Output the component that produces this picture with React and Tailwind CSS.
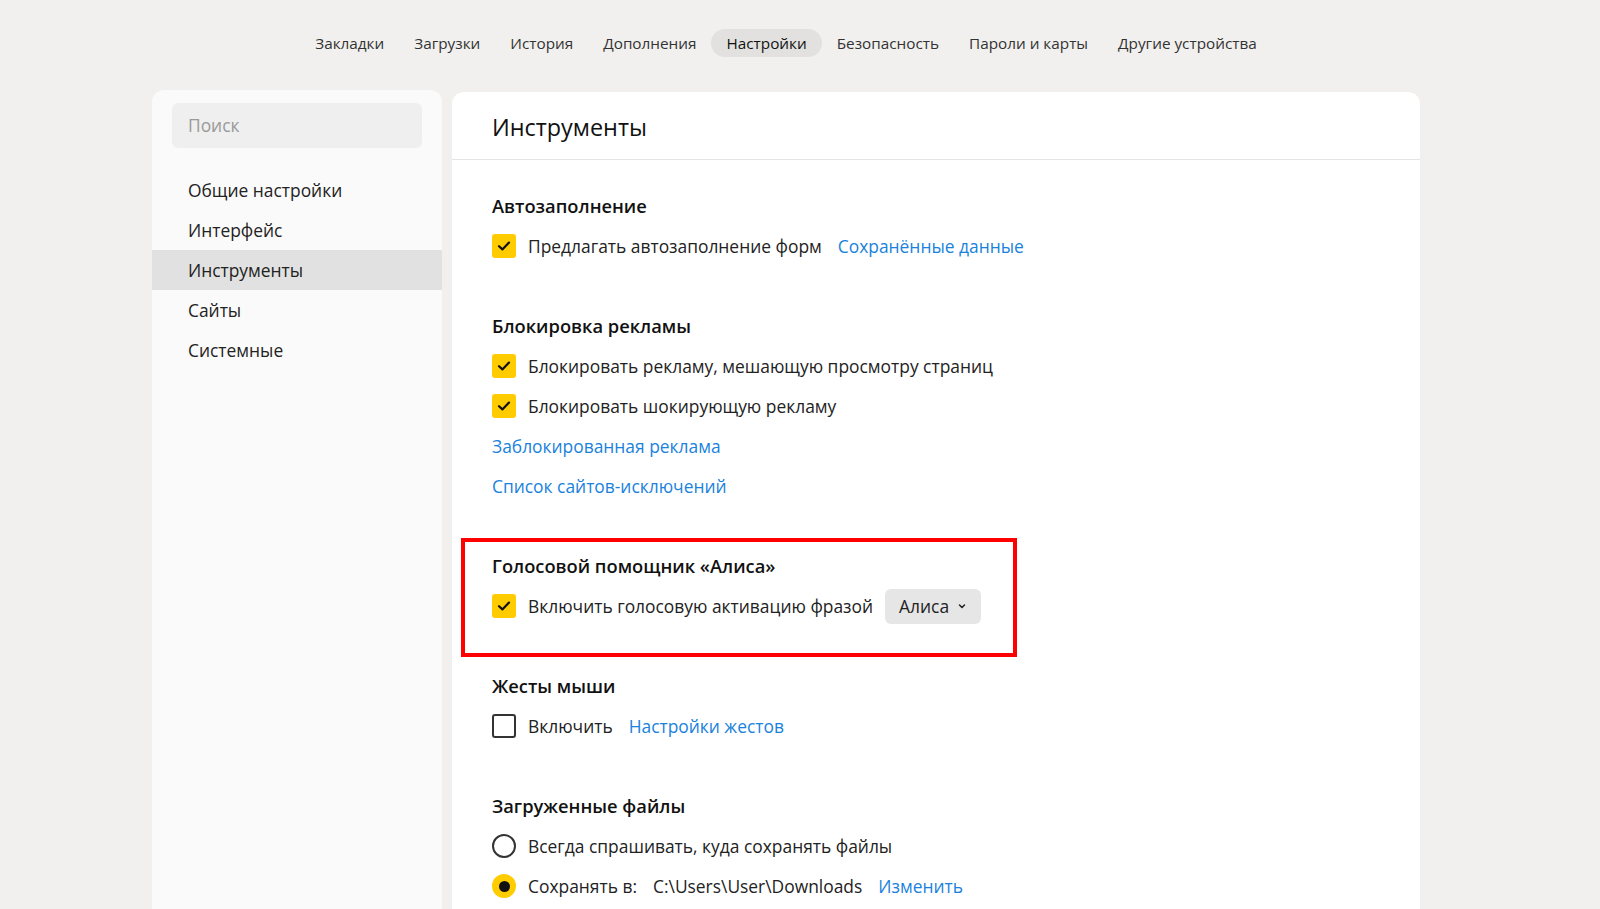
import React from 'react';

const font = { fontFamily: '"Open Sans", "Noto Sans", sans-serif' };

const tabs = ['Закладки', 'Загрузки', 'История', 'Дополнения', 'Настройки', 'Безопасность', 'Пароли и карты', 'Другие устройства'];
const menu = ['Общие настройки', 'Интерфейс', 'Инструменты', 'Сайты', 'Системные'];

function Check({ on }) {
    if (!on) {
        return <div className="w-6 h-6 shrink-0 rounded-[3px] border-2 border-[#333]"></div>;
    }
    return (
        <div className="w-6 h-6 shrink-0 rounded-[3px] bg-[#ffcc00] flex items-center justify-center">
            <svg width="16" height="16" viewBox="0 0 16 16" fill="none">
                <path d="M3 8.2 L6.4 11.4 L13 4.6" stroke="#111" strokeWidth="2.2" strokeLinecap="round" strokeLinejoin="round" />
            </svg>
        </div>
    );
}

function Radio({ on }) {
    if (on) {
        return (
            <div className="w-6 h-6 shrink-0 rounded-full bg-[#ffcc00] flex items-center justify-center">
                <div className="w-[11px] h-[11px] rounded-full bg-[#111]"></div>
            </div>
        );
    }
    return <div className="w-6 h-6 shrink-0 rounded-full border-2 border-[#333]"></div>;
}

function Link({ children }) {
    return <span className="text-[#1a82dc] cursor-pointer">{children}</span>;
}

function Row({ children }) {
    return <div className="h-10 flex items-center gap-3 text-[#222]">{children}</div>;
}

function Section({ title, children }) {
    return (
        <div className="mb-10">
            <div className="h-10 flex items-center font-semibold text-[18.3px] text-[#111]">{title}</div>
            {children}
        </div>
    );
}

export default function App() {
    return (
        <div className="w-full h-[909px] overflow-hidden bg-[#f1f0ee]" style={font}>
            <div className="w-[1572px]">
                <div className="h-[88px] pt-[29px] flex justify-center">
                    <div className="flex h-7 text-[15.3px] text-[#333]">
                        {tabs.map((t) => (
                            <div
                                key={t}
                                className={`px-[15px] flex items-center rounded-full ${t === 'Настройки' ? 'bg-[#e2e1df] text-[#111]' : ''}`}
                            >
                                {t}
                            </div>
                        ))}
                    </div>
                </div>

                <div className="mx-auto w-[1268px] flex gap-[10px] pt-[2px]">
                    <div className="w-[290px] h-[900px] shrink-0 bg-[#fafafa] rounded-t-xl pt-[13px]">
                        <div className="mx-5 h-[45px] rounded-md bg-[#efefef] flex items-center px-4 text-[17.4px] text-[#999]">
                            Поиск
                        </div>
                        <div className="mt-[22px] text-[17.4px] text-[#222]">
                            {menu.map((m) => (
                                <div
                                    key={m}
                                    className={`h-10 flex items-center pl-9 ${m === 'Инструменты' ? 'bg-[#e1e1e1]' : ''}`}
                                >
                                    {m}
                                </div>
                            ))}
                        </div>
                    </div>

                    <div className="flex-1 h-[900px] bg-white rounded-t-xl mt-[2px]">
                        <div className="h-[68px] border-b border-[#e4e4e4] flex items-center pt-[5px] px-10 text-[23.4px] text-[#111]">
                            Инструменты
                        </div>
                        <div className="px-10 pt-[26px] text-[17.4px]">
                            <Section title="Автозаполнение">
                                <Row>
                                    <Check on />
                                    <span>Предлагать автозаполнение форм</span>
                                    <span className="ml-1"><Link>Сохранённые данные</Link></span>
                                </Row>
                            </Section>

                            <Section title="Блокировка рекламы">
                                <Row>
                                    <Check on />
                                    <span>Блокировать рекламу, мешающую просмотру страниц</span>
                                </Row>
                                <Row>
                                    <Check on />
                                    <span>Блокировать шокирующую рекламу</span>
                                </Row>
                                <Row>
                                    <Link>Заблокированная реклама</Link>
                                </Row>
                                <Row>
                                    <Link>Список сайтов-исключений</Link>
                                </Row>
                            </Section>

                            <div className="relative">
                                <div className="absolute left-[-31px] top-[-8px] w-[556px] h-[119px] border-4 border-[#ff0000] pointer-events-none"></div>
                                <Section title="Голосовой помощник «Алиса»">
                                    <Row>
                                        <Check on />
                                        <span>Включить голосовую активацию фразой</span>
                                        <div className="ml-0 h-[35px] px-[14px] rounded-md bg-[#e6e6e6] flex items-center gap-2 text-[#222]">
                                            Алиса
                                            <svg width="10" height="10" viewBox="0 0 10 10" fill="none">
                                                <path d="M2.5 4 L5 6.5 L7.5 4" stroke="#222" strokeWidth="1.5" strokeLinecap="round" strokeLinejoin="round" />
                                            </svg>
                                        </div>
                                    </Row>
                                </Section>
                            </div>

                            <Section title="Жесты мыши">
                                <Row>
                                    <Check />
                                    <span>Включить</span>
                                    <span className="ml-1"><Link>Настройки жестов</Link></span>
                                </Row>
                            </Section>

                            <Section title="Загруженные файлы">
                                <Row>
                                    <Radio />
                                    <span>Всегда спрашивать, куда сохранять файлы</span>
                                </Row>
                                <Row>
                                    <Radio on />
                                    <span>Сохранять в:</span>
                                    <span className="ml-1">C:\Users\User\Downloads</span>
                                    <span className="ml-1"><Link>Изменить</Link></span>
                                </Row>
                            </Section>
                        </div>
                    </div>
                </div>
            </div>
        </div>
    );
}
